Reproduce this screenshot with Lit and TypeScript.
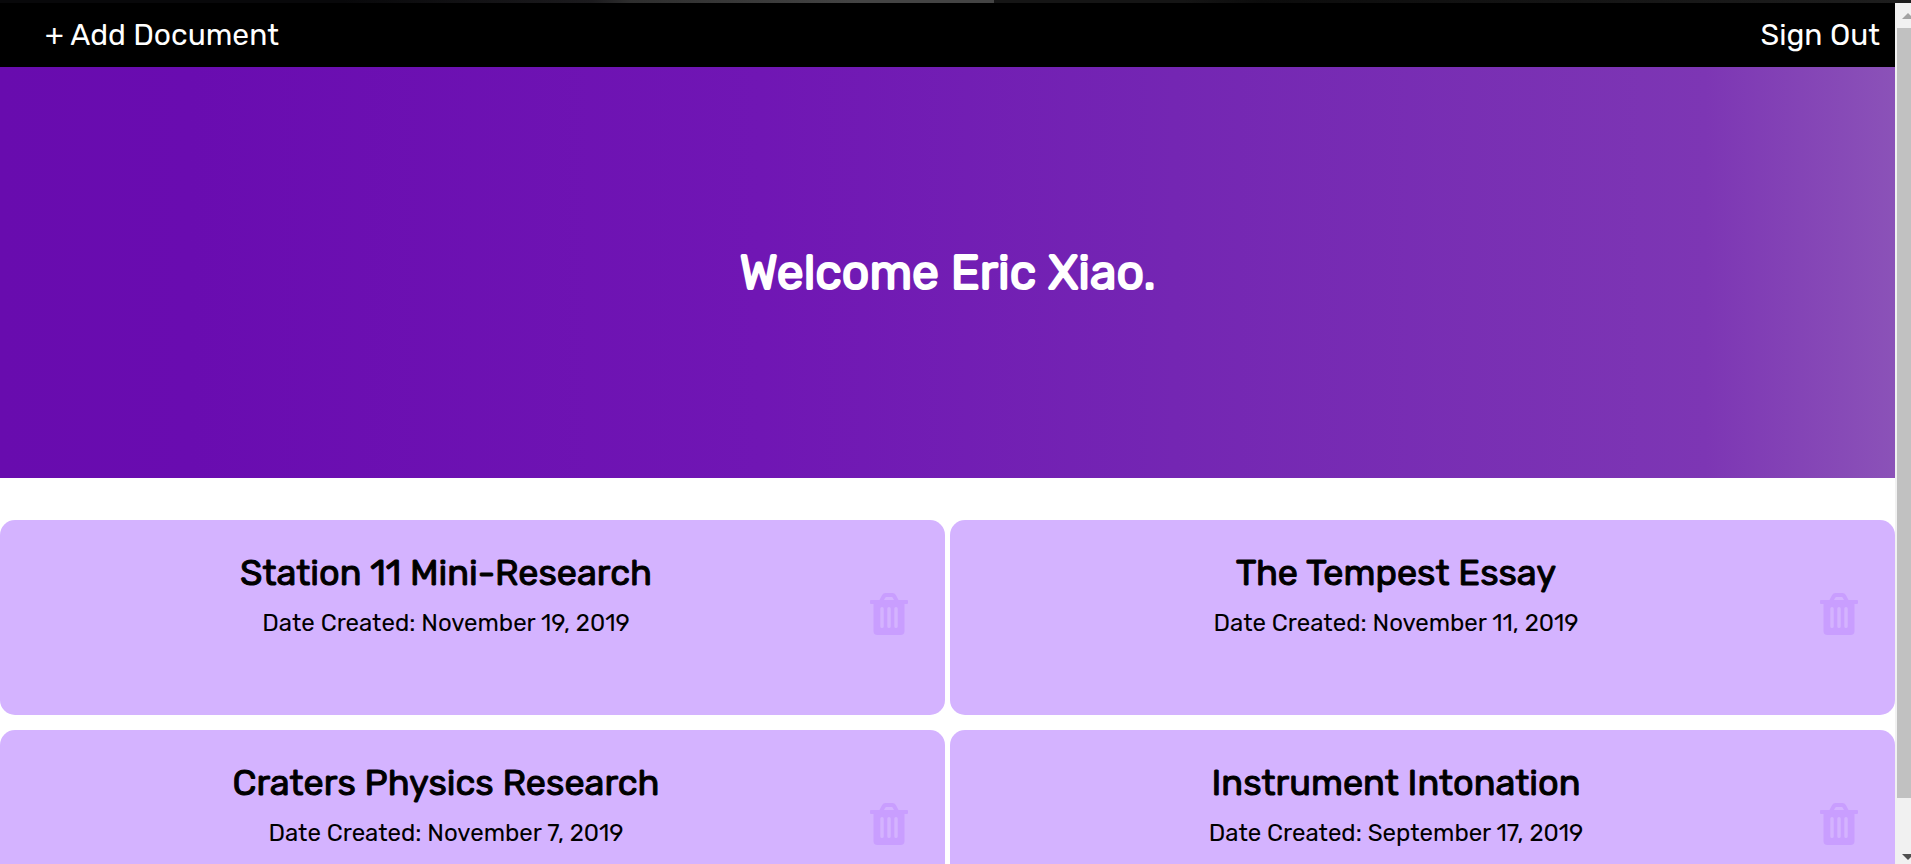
import { LitElement, html, css } from "lit";
import { customElement, property } from "lit/decorators.js";

interface Doc {
  title: string;
  created: string;
}

@customElement("document-card")
class DocumentCard extends LitElement {
  @property({ attribute: false }) doc!: Doc;

  static styles = css`
    .card {
      box-sizing: border-box;
      display: flex;
      align-items: flex-start;
      min-height: 195px;
      padding: 32px 37px 31px 22px;
      border-radius: 15px;
      background: #d4b3ff;
      color: #000;
    }
    .text {
      flex: 1;
      text-align: center;
    }
    .title {
      margin: 0 0 15px;
      font-size: 36px;
      line-height: 42px;
      font-weight: 400;
      -webkit-text-stroke: 1px currentColor;
    }
    .date {
      margin: 0;
      font-size: 24px;
      line-height: 28px;
      font-weight: 400;
    }
    .delete {
      align-self: center;
      display: block;
      margin: 0;
      padding: 0 0 8px;
      border: 0;
      background: none;
      color: #c99eff;
      cursor: pointer;
    }
    .delete svg {
      display: block;
      width: 38px;
      height: 42px;
    }
  `;

  render() {
    return html`
      <article class="card">
        <div class="text">
          <h2 class="title">${this.doc.title}</h2>
          <p class="date">Date Created: ${this.doc.created}</p>
        </div>
        <button class="delete" aria-label="Delete ${this.doc.title}">
          <svg viewBox="0 0 38 42" fill="currentColor" aria-hidden="true">
            <path
              fill-rule="evenodd"
              d="M1 7H9.500L12 2.200Q13.200 0 15.500 0H22.500Q24.800 0 26 2.200L28.500 7H37Q38 7 38 8V10Q38 11 37 11H34.500V38Q34.500 42 30.500 42H7.500Q3.500 42 3.500 38V11H1Q0 11 0 10V8Q0 7 1 7ZM14 7H24L22.800 4.700Q22.400 4 21.600 4H16.400Q15.600 4 15.200 4.700ZM12 14Q10.300 14 10.300 15.500V33.500Q10.300 35 12 35Q13.700 35 13.700 33.500V15.500Q13.700 14 12 14ZM19 14Q17.300 14 17.300 15.500V33.500Q17.300 35 19 35Q20.700 35 20.700 33.500V15.500Q20.700 14 19 14ZM26 14Q24.300 14 24.300 15.500V33.500Q24.300 35 26 35Q27.700 35 27.700 33.500V15.500Q27.700 14 26 14Z"
            />
          </svg>
        </button>
      </article>
    `;
  }
}

@customElement("app-root")
class AppRoot extends LitElement {
  private docs: Doc[] = [
    { title: "Station 11 Mini-Research", created: "November 19, 2019" },
    { title: "The Tempest Essay", created: "November 11, 2019" },
    { title: "Craters Physics Research", created: "November 7, 2019" },
    { title: "Instrument Intonation", created: "September 17, 2019" },
  ];

  static styles = css`
    :host {
      display: flex;
      flex-direction: column;
      height: 100vh;
      overflow: hidden;
      background: #fff;
      font-family: Rubik, Roboto, "Liberation Sans", sans-serif;
    }
    .edge {
      flex: none;
      height: 3px;
      background: linear-gradient(90deg, #08080a 0 18%, #1c1b1e 31%, #2e2e2e 33%, #444 45% 52%, #151515 52% 62%, #0c0c0c 66%, #1e1e1e);
    }
    .window {
      flex: 1;
      min-height: 0;
      display: flex;
    }
    .page {
      flex: 1;
      min-width: 0;
      overflow: hidden;
    }
    .bar {
      display: flex;
      justify-content: space-between;
      align-items: center;
      height: 64px;
      padding: 0 15px 0 45px;
      background: #000;
    }
    .action {
      margin: 0;
      padding: 0;
      border: 0;
      background: none;
      color: #fff;
      font-family: inherit;
      font-size: 30px;
      line-height: 36px;
      font-weight: 400;
      text-decoration: none;
      cursor: pointer;
    }
    .hero {
      display: grid;
      place-items: center;
      min-height: 411px;
      background: linear-gradient(90deg, #680cae 0%, #690cb0 10%, #7016b4 40%, #7426b3 62%, #7d36b4 90%, #8b52b8 100%);
    }
    .welcome {
      margin: 0;
      color: #fff;
      font-size: 48px;
      line-height: 60px;
      font-weight: 400;
      -webkit-text-stroke: 2px currentColor;
    }
    .docs {
      display: grid;
      grid-template-columns: 1fr 1fr;
      gap: 15px 5px;
      padding-top: 42px;
    }
    .scroll {
      flex: none;
      display: flex;
      flex-direction: column;
      width: 16px;
      background: #f1f1f1;
    }
    .cap {
      flex: none;
      display: block;
      width: 16px;
      height: 25px;
    }
    .track {
      flex: 1;
      padding-left: 2px;
    }
    .thumb {
      height: 95%;
      background: #c1c1c1;
    }
  `;

  render() {
    return html`
      <div class="edge"></div>
      <div class="window">
        <main class="page">
          <nav class="bar">
            <button class="action">+ Add Document</button>
            <a class="action" href="#signout">Sign Out</a>
          </nav>
          <header class="hero"><h1 class="welcome">Welcome Eric Xiao.</h1></header>
          <section class="docs">
            ${this.docs.map((doc) => html`<document-card .doc=${doc}></document-card>`)}
          </section>
        </main>
        <div class="scroll" aria-hidden="true">
          <svg class="cap" viewBox="0 0 16 25"><path d="M7 16L13 10L19 16Z" fill="#a3a3a3" /></svg>
          <div class="track"><div class="thumb"></div></div>
          <svg class="cap" viewBox="0 0 16 25"><path d="M7 15H19L13 21Z" fill="#505050" /></svg>
        </div>
      </div>
    `;
  }
}
